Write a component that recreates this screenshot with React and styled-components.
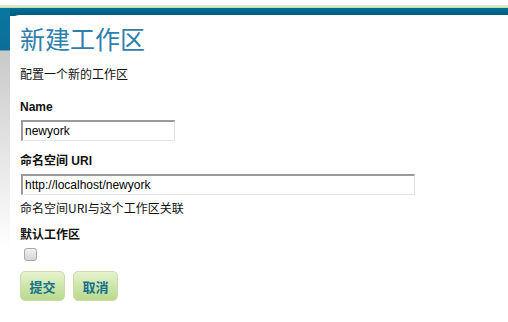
import React from 'react';
import styled, {createGlobalStyle} from 'styled-components'

const GLOBAL = createGlobalStyle`
html, body {
    margin: 0;
    background: #fff;
}
body {
    font-family: "Liberation Sans", "Noto Sans CJK SC", Arial, sans-serif;
    font-size: 12px;
    color: #111;
}
`
const PAGE = styled.div`
width: 508px;
height: 322px;
overflow: hidden;
padding-top: 5px;
box-sizing: border-box;
`
const STRIPE = styled.div`
height: 3px;
background: linear-gradient(#e4efd8, #c3dcae);
`
const SHELL = styled.div`
display: flex;
height: 314px;
background:
    linear-gradient(#006f96, #005b7c) top left / 100% 8px no-repeat;
`
const SIDE = styled.div`
width: 10px;
flex: none;
background: linear-gradient(
    #0a76a0 0,
    #0b6f98 42px,
    #c9c9c9 43px,
    #dedede 120px,
    #f4f4f4 200px,
    #fff 240px
);
`
const PANEL = styled.main`
flex: 1;
margin-top: 7px;
background: #fff;
border-top-left-radius: 9px;
padding: 7px 0 0 10px;
`
const TITLE = styled.h1`
margin: 0;
font-family: "Noto Sans CJK SC", sans-serif;
font-weight: 400;
font-size: 25px;
line-height: 32px;
color: #2f7eab;
`
const LEAD = styled.p`
margin: 12px 0 0;
font-family: "Noto Sans CJK SC", sans-serif;
line-height: 16px;
`
const FIELD = styled.div`
display: flex;
flex-direction: column;
align-items: flex-start;
margin-top: ${p => p.$gap || 12}px;
`
const LABEL = styled.label`
font-weight: bold;
line-height: 16px;
margin-bottom: 5px;
font-family: "Liberation Sans", "Noto Sans CJK SC", sans-serif;
`
const INPUT = styled.input`
width: ${p => p.$w}px;
height: 21px;
box-sizing: border-box;
margin: 0 0 0 1px;
padding: 0 2px;
font-family: "Liberation Sans", Arial, sans-serif;
font-size: 12px;
color: #000;
border-style: solid;
border-width: 2px 1px 1px 2px;
border-color: #9a9a9a #e4e4e4 #e4e4e4 #9a9a9a;
outline: none;
background: #fff;
`
const HELP = styled.div`
margin-top: 5px;
line-height: 16px;
font-family: "Noto Sans CJK SC", sans-serif;
`
const CHECK = styled.input`
appearance: none;
width: 13px;
height: 13px;
margin: 0 0 0 4px;
border: 1px solid #a8a8a8;
border-radius: 3px;
background: linear-gradient(#f2f2f2, #d4d4d4);
box-sizing: border-box;
`
const ACTIONS = styled.div`
display: flex;
gap: 8px;
margin-top: 10px;
`
const BUTTON = styled.button`
width: 45px;
height: 30px;
padding: 0;
border: 1px solid #c8dcae;
border-radius: 5px;
background: linear-gradient(#e6f3cf, #c9e3a2 60%, #b9d98d);
color: #13708d;
font-family: "Noto Sans CJK SC", sans-serif;
font-weight: bold;
font-size: 13px;
cursor: pointer;
`

const App = () => {
    return (
        <>
        <GLOBAL />
        <PAGE>
            <STRIPE />
            <SHELL>
                <SIDE />
                <PANEL>
                    <TITLE>新建工作区</TITLE>
                    <LEAD>配置一个新的工作区</LEAD>

                    <FIELD $gap={17}>
                        <LABEL htmlFor="name">Name</LABEL>
                        <INPUT id="name" $w={154} defaultValue="newyork" />
                    </FIELD>

                    <FIELD>
                        <LABEL htmlFor="uri">命名空间 URI</LABEL>
                        <INPUT id="uri" $w={394} defaultValue="http://localhost/newyork" />
                        <HELP>命名空间URI与这个工作区关联</HELP>
                    </FIELD>

                    <FIELD $gap={11}>
                        <LABEL htmlFor="def">默认工作区</LABEL>
                        <CHECK id="def" type="checkbox" />
                    </FIELD>

                    <ACTIONS>
                        <BUTTON>提交</BUTTON>
                        <BUTTON>取消</BUTTON>
                    </ACTIONS>
                </PANEL>
            </SHELL>
        </PAGE>
        </>
    );
}

export default App;
